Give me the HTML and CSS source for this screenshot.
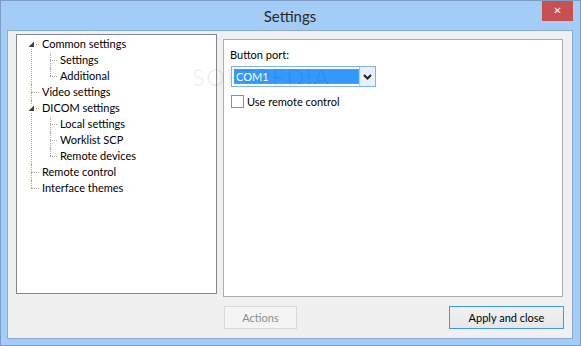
FILE: index.html
```html
<!DOCTYPE html>
<html lang="en">
<head>
    <meta charset="UTF-8">
    <title>Settings</title>
    <link rel="stylesheet" href="styles.css">
</head>
<body>
    <div class="window">
        <div class="titlebar">
            <span></span>
            <span class="title">Settings</span>
            <span class="close">&#x2715;</span>
        </div>
        <div class="client">
            <ul class="tree">
                <li class="first">
                    <span class="toggle"><svg width="7" height="7" viewBox="0 0 7 7"><polygon points="6,0.5 6,6 0.5,6" fill="#404040"/></svg></span>
                    <span class="label">Common settings</span>
                    <ul>
                        <li><span class="label">Settings</span></li>
                        <li><span class="label">Additional</span></li>
                    </ul>
                </li>
                <li class="leaf"><span class="label">Video settings</span></li>
                <li>
                    <span class="toggle"><svg width="7" height="7" viewBox="0 0 7 7"><polygon points="6,0.5 6,6 0.5,6" fill="#404040"/></svg></span>
                    <span class="label">DICOM settings</span>
                    <ul>
                        <li><span class="label">Local settings</span></li>
                        <li><span class="label">Worklist SCP</span></li>
                        <li><span class="label">Remote devices</span></li>
                    </ul>
                </li>
                <li class="leaf"><span class="label">Remote control</span></li>
                <li class="leaf"><span class="label">Interface themes</span></li>
            </ul>

            <div class="right">
                <div class="panel">
                    <div class="field-label">Button port:</div>
                    <div class="combo">
                        <span class="combo-value"><span class="focus">COM1</span></span>
                        <span class="combo-button"><svg width="9" height="6" viewBox="0 0 9 6"><polyline points="1,1 4.5,4.5 8,1" fill="none" stroke="#1e1e1e" stroke-width="2"/></svg></span>
                    </div>
                    <label class="check"><span class="box"></span>Use remote control</label>
                    <div class="watermark">SOFTPEDIA</div>
                </div>
                <div class="buttons">
                    <span class="btn disabled">Actions</span>
                    <span class="btn default">Apply and close</span>
                </div>
            </div>
        </div>
    </div>
</body>
</html>
```

FILE: styles.css
```css
body { margin: 0; font-family: Lato, "Noto Sans", sans-serif; font-size: 11px; color: #000; }
.window {
    width: 581px;
    height: 346px;
    box-sizing: border-box;
    border: 1px solid #7d9dc6;
    background-color: #a3cdf6;
    padding: 0 7px 6px 6px;
    display: flex;
    flex-direction: column;
}
.titlebar { height: 29px; display: grid; grid-template-columns: 31px 1fr 31px; }
.title { text-align: center; font-size: 15px; color: #2a2a2a; line-height: 31px; }
.close {
    height: 20px;
    background-color: #c75050;
    color: #fff;
    font-family: "DejaVu Sans", sans-serif;
    font-size: 10px;
    font-weight: bold;
    text-align: center;
    line-height: 20px;
}
.client {
    flex: 1;
    background-color: #f0f0f0;
    border: 1px solid #88aad4;
    padding-left: 8px;
    display: flex;
    align-items: flex-start;
    gap: 6px;
}

/* tree view */
.tree {
    list-style: none;
    margin: 3px 0 0;
    padding: 1px 0 0;
    width: 201px;
    height: 260px;
    box-sizing: border-box;
    background: #fff;
    border: 1px solid #828790;
}
.tree ul { list-style: none; margin: 0; padding: 0; }
.tree li { position: relative; }
.tree .label { display: block; height: 16px; line-height: 16px; padding-left: 25px; white-space: nowrap; }
.tree li::before { content: ""; position: absolute; left: 14px; top: 0; bottom: 0; border-left: 1px dotted #a8a8a8; }
.tree li::after { content: ""; position: absolute; left: 14px; top: 8px; width: 8px; border-top: 1px dotted #a8a8a8; }
.tree > li.first::before { top: 8px; }
.tree > li:last-child::before { bottom: auto; height: 8px; }
.tree ul li::before { left: 33px; }
.tree ul li:first-child::before { top: 1px; }
.tree ul li::after { left: 33px; width: 7px; }
.tree ul li:last-child::before { bottom: auto; height: 8px; }
.tree ul .label { padding-left: 43px; }
.toggle {
    position: absolute;
    left: 10px;
    top: 4px;
    width: 9px;
    height: 9px;
    background: #fff;
    z-index: 1;
    display: flex;
    align-items: center;
    justify-content: center;
}

/* right side */
.right { display: flex; flex-direction: column; }
.panel {
    position: relative;
    margin-top: 8px;
    width: 340px;
    height: 258px;
    box-sizing: border-box;
    background: #fff;
    border: 1px solid #abadb3;
    padding: 6px 0 0 6px;
}
.field-label { line-height: 17px; }
.combo {
    margin: 3px 0 0 1px;
    width: 145px;
    height: 21px;
    box-sizing: border-box;
    border: 1px solid #7eb4ea;
    display: flex;
}
.combo-value { flex: 1; padding: 2px 0 2px 2px; }
.focus {
    display: block;
    height: 15px;
    box-sizing: border-box;
    background: #3399ff;
    color: #fff;
    line-height: 13px;
    padding-left: 1px;
    border: 1px dotted #e8841e;
}
.combo-button {
    width: 15px;
    border-left: 1px solid #a9cdf1;
    background: #e8f1fb;
    display: flex;
    align-items: center;
    justify-content: center;
}
.check { display: flex; align-items: center; margin: 8px 0 0 1px; height: 13px; gap: 3px; }
.box { width: 13px; height: 13px; box-sizing: border-box; border: 1px solid #8e8f8f; background: #fff; }
.watermark {
    position: absolute;
    left: -32px;
    top: 22px;
    font-size: 24px;
    letter-spacing: 1px;
    color: rgba(0, 0, 0, 0.06);
    pointer-events: none;
}
.buttons { display: flex; justify-content: space-between; margin: 9px -1px 0 1px; }
.btn {
    height: 23px;
    box-sizing: border-box;
    display: flex;
    align-items: center;
    justify-content: center;
}
.disabled { width: 73px; border: 1px solid #d9d9d9; background: #f4f4f4; color: #8d8d8d; }
.default {
    width: 115px;
    border: 1px solid #3c97ed;
    background: linear-gradient(#f2f2f2, #e6e6e6);
    color: #000;
}
```
